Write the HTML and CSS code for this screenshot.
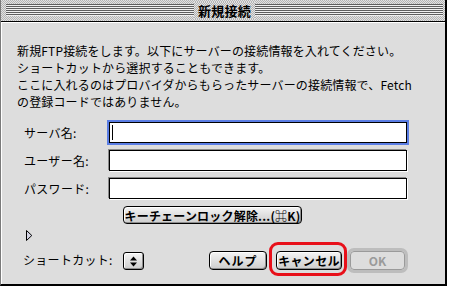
FILE: index.html
```html
<!DOCTYPE html>
<html lang="ja">
<head>
<meta charset="utf-8">
<title>新規接続</title>
<link rel="stylesheet" href="styles.css">
</head>
<body>
<div class="window">
  <div class="titlebar">
    <div class="stripes"><span class="title">新規接続</span></div>
  </div>
  <div class="content">
    <p class="intro">新規FTP接続をします。以下にサーバーの接続情報を入れてください。<br>ショートカットから選択することもできます。<br>ここに入れるのはプロバイダからもらったサーバーの接続情報で、Fetch<br>の登録コードではありません。</p>
    <div class="form">
      <span class="label">サーバ名:</span>
      <div class="field focus"><span class="caret"></span></div>
      <span class="label">ユーザー名:</span>
      <div class="field"></div>
      <span class="label">パスワード:</span>
      <div class="field"></div>
    </div>
    <div class="keyrow"><button class="btn key">キーチェーンロック解除...(⌘K)</button></div>
    <div class="disclosure">
      <svg width="7" height="11" viewBox="0 0 7 11"><polygon points="0.5,0.5 5.8,5.5 0.5,10.5" fill="#d4d4e4" stroke="#000" stroke-width="1"/></svg>
    </div>
    <div class="bottom">
      <span class="sc-label">ショートカット:</span>
      <span class="popup">
        <svg width="7" height="11" viewBox="0 0 7 11"><polygon points="3.5,0.5 7,4.5 0,4.5" fill="#000"/><polygon points="0,6.5 7,6.5 3.5,10.5" fill="#000"/></svg>
      </span>
      <button class="btn help">ヘルプ</button>
      <span class="highlight"><button class="btn cancel">キャンセル</button></span>
      <span class="okwrap"><button class="btn ok">OK</button></span>
    </div>
  </div>
</div>
</body>
</html>
```
FILE: styles.css
```css
* { box-sizing: border-box; }
html, body { margin: 0; padding: 0; }
body {
  width: 449px;
  height: 287px;
  overflow: hidden;
  background: #ffffff;
  font-family: "Noto Sans CJK JP", "Noto Sans", sans-serif;
  font-size: 12px;
  color: #000;
}
.window {
  width: 447px;
  height: 286px;
  display: flex;
  flex-direction: column;
  background: #dddddd;
  border-left: 1px solid #7a7a7a;
  border-right: 2px solid #000;
  border-bottom: 2px solid #000;
}
.titlebar {
  flex: none;
  height: 22px;
  padding: 4px 2px 0 5px;
  border-bottom: 1px solid #000;
  background: repeating-conic-gradient(#b4b4b4 0 25%, #e2e2e2 0 50%) 0 0 / 2px 2px;
}
.stripes {
  height: 12px;
  display: flex;
  justify-content: center;
  align-items: center;
  background: repeating-linear-gradient(to bottom, #5e5e5e 0 1px, #f0f0f0 1px 2px);
}
.title {
  height: 17px;
  line-height: 17px;
  padding: 0 4px;
  font-size: 13px;
  font-weight: bold;
  letter-spacing: 0.3px;
  background: repeating-conic-gradient(#b4b4b4 0 25%, #e2e2e2 0 50%) 0 0 / 2px 2px;
}
.content {
  flex: 1;
  padding: 20px 0 0 16px;
  box-shadow: inset 1px 1px 0 #ffffff;
}
.intro {
  margin: 0;
  line-height: 17px;
  letter-spacing: 0.15px;
  white-space: nowrap;
}
.form {
  display: grid;
  grid-template-columns: 92px 298px;
  row-gap: 7px;
  margin-top: 12px;
  align-items: center;
}
.label { padding-left: 7px; line-height: 17px; letter-spacing: 0.3px; }
.field {
  height: 21px;
  background: #fff;
  border: 1px solid #000;
  box-shadow: -1px -1px 0 #8a8a8a, 1px 1px 0 #ffffff;
  display: flex;
  align-items: center;
}
.field.focus {
  box-shadow: 0 0 0 2px #5a7de4;
}
.caret {
  width: 1px;
  height: 15px;
  margin-left: 2px;
  background: #000;
}
.keyrow {
  margin-top: 7px;
  padding-left: 106px;
  display: flex;
}
.btn {
  font-family: "Noto Sans CJK JP", "Noto Sans", sans-serif;
  font-size: 12px;
  font-weight: bold;
  color: #000;
  height: 19px;
  line-height: 17px;
  padding: 0;
  border: 1px solid #000;
  border-radius: 4px;
  background: linear-gradient(#f4f4f4, #cdcdcd);
  box-shadow: inset 1px 1px 0 #ffffff, inset -1px -1px 0 #8e8e8e;
  white-space: nowrap;
  display: flex;
  align-items: center;
  justify-content: center;
}
.key { width: 179px; height: 18px; letter-spacing: 0.2px; }
.disclosure {
  margin-top: 6px;
  padding-left: 9px;
  height: 11px;
  display: flex;
}
.bottom {
  margin-top: 1px;
  height: 34px;
  display: flex;
  align-items: flex-start;
}
.sc-label {
  width: 106px;
  padding-left: 6px;
  margin-top: 9px;
  line-height: 17px;
  letter-spacing: 0.3px;
  white-space: nowrap;
}
.popup {
  width: 21px;
  height: 18px;
  margin-top: 10px;
  border: 1px solid #000;
  border-radius: 3px;
  background: linear-gradient(#f4f4f4, #cdcdcd);
  box-shadow: inset 1px 1px 0 #ffffff, inset -1px -1px 0 #8e8e8e;
  display: flex;
  align-items: center;
  justify-content: center;
}
.help { width: 58px; margin-left: 65px; margin-top: 9px; letter-spacing: 1px; }
.highlight {
  margin-left: 2px;
  width: 78px;
  height: 34px;
  border: 3px solid #e8101a;
  border-radius: 9px;
  padding: 6px 0 0 4px;
  display: flex;
  align-items: flex-start;
}
.cancel { width: 66px; letter-spacing: 0.3px; }
.okwrap {
  width: 61px;
  height: 25px;
  margin-top: 6px;
  border: 3px solid #bdbdbd;
  border-radius: 7px;
  display: flex;
  align-items: center;
  justify-content: center;
}
.ok {
  width: 55px;
  height: 19px;
  color: #9a9a9a;
  border-color: #9a9a9a;
  background: #dddddd;
  box-shadow: none;
}
```
